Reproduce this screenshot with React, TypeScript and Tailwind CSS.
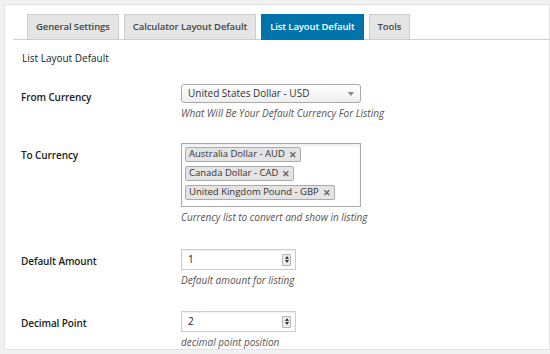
const tabs = ['General Settings', 'Calculator Layout Default', 'List Layout Default', 'Tools'];

function Spinner() {
  return (
    <div className="flex h-[12px] w-[9px] flex-col items-center justify-center gap-px rounded-[1px] border border-[#b5b5b5] bg-[#ececec]">
      <div className="h-0 w-0 border-x-[2.5px] border-b-[3px] border-x-transparent border-b-[#333]" />
      <div className="h-0 w-0 border-x-[2.5px] border-t-[3px] border-x-transparent border-t-[#333]" />
    </div>
  );
}

function Tag({ label }: { label: string }) {
  return (
    <div className="flex h-[15px] w-fit items-center gap-1 rounded-[2px] border border-[#aaa] bg-[#e4e4e4] px-[3px] text-[9.5px] text-[#333]">
      <span>{label}</span>
      <span className="text-[9px] font-bold text-[#666]">✕</span>
    </div>
  );
}

function Row({ label, desc, children, labelPt }: { label: string; desc: string; children: React.ReactNode; labelPt: string }) {
  return (
    <div className="flex">
      <div className={`w-[160px] shrink-0 text-[10px] font-semibold tracking-[-0.1px] text-[#222] ${labelPt}`}>{label}</div>
      <div className="flex flex-col">
        {children}
        <div className="mt-[3px] text-[10px] italic text-[#555]">{desc}</div>
      </div>
    </div>
  );
}

export default function App() {
  return (
    <div className="h-[354px] w-[550px] overflow-hidden bg-[#f1f1f1] pl-[4px] pt-[4px]" style={{ fontFamily: '"Open Sans", sans-serif' }}>
      <div className="h-[346px] border border-[#e2e2e2] bg-white">
        <div className="ml-[8px] flex items-end gap-[5px] border-b border-[#cfcfcf] pl-[14px] pt-[9px]">
          {tabs.map((t) => (
            <div
              key={t}
              className={`-mb-px flex h-[26px] items-center border px-[8px] text-[9.5px] font-semibold tracking-[-0.1px] ${
                t === 'List Layout Default'
                  ? 'border-[#0073aa] bg-[#0073aa] text-white'
                  : 'border-[#cccccc] bg-[#e5e5e5] text-[#444]'
              }`}
            >
              {t}
            </div>
          ))}
        </div>

        <div className="pl-[17px] pt-[11px] text-[10px] text-[#222]">List Layout Default</div>

        <div className="mt-[18px] flex flex-col pl-[16px]">
          <Row label="From Currency" desc="What Will Be Your Default Currency For Listing" labelPt="pt-[6px]">
            <div className="flex h-[19px] w-[180px] items-center justify-between rounded-[3px] border border-[#aaa] bg-gradient-to-b from-white to-[#eee] pl-[6px] pr-[6px] text-[10px] text-[#333]">
              <span>United States Dollar - USD</span>
              <div className="h-0 w-0 border-x-[3px] border-t-[4px] border-x-transparent border-t-[#888]" />
            </div>
          </Row>

          <div className="mt-[22px]">
            <Row label="To Currency" desc="Currency list to convert and show in listing" labelPt="pt-[5px]">
              <div className="flex h-[64px] w-[180px] flex-col gap-[4px] border border-[#aaa] bg-white px-[3px] pt-[3px] shadow-[inset_0_2px_3px_rgba(0,0,0,0.08)]">
                <Tag label="Australia Dollar - AUD" />
                <Tag label="Canada Dollar - CAD" />
                <Tag label="United Kingdom Pound - GBP" />
              </div>
            </Row>
          </div>

          <div className="mt-[24px]">
            <Row label="Default Amount" desc="Default amount for listing" labelPt="pt-[5px]">
              <div className="flex h-[21px] w-[115px] items-center justify-between border border-[#ccc] bg-white pl-[6px] pr-[4px] text-[10px] text-[#222] shadow-[inset_0_1px_2px_rgba(0,0,0,0.07)]">
                <span>1</span>
                <Spinner />
              </div>
            </Row>
          </div>

          <div className="mt-[23px]">
            <Row label="Decimal Point" desc="decimal point position" labelPt="pt-[5px]">
              <div className="flex h-[21px] w-[115px] items-center justify-between border border-[#ccc] bg-white pl-[6px] pr-[4px] text-[10px] text-[#222] shadow-[inset_0_1px_2px_rgba(0,0,0,0.07)]">
                <span>2</span>
                <Spinner />
              </div>
            </Row>
          </div>
        </div>
      </div>
    </div>
  );
}
